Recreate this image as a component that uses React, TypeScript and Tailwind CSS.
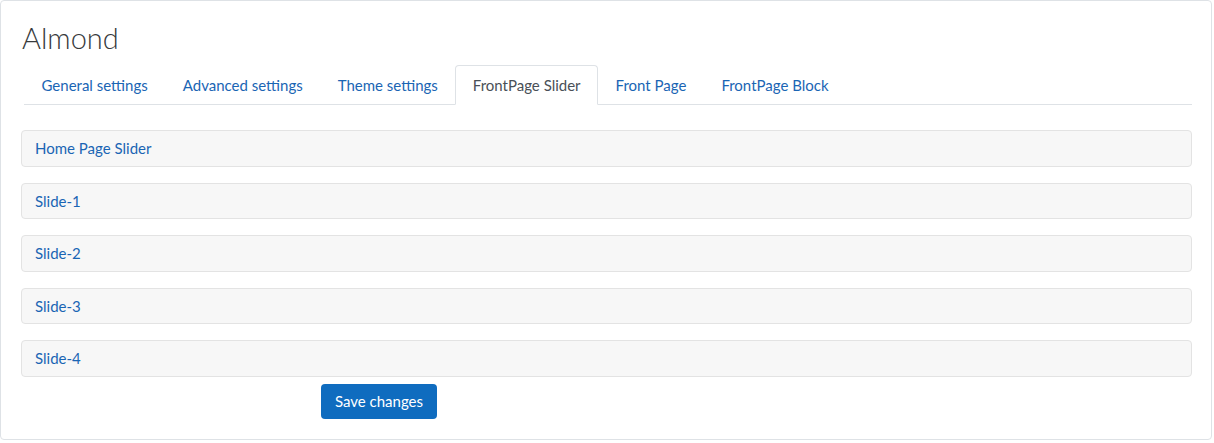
import React from "react";

const TABS = [
  "General settings",
  "Advanced settings",
  "Theme settings",
  "FrontPage Slider",
  "Front Page",
  "FrontPage Block",
];

const SECTIONS = ["Home Page Slider", "Slide-1", "Slide-2", "Slide-3", "Slide-4"];

export default function App() {
  const active = "FrontPage Slider";

  return (
    <div className="w-[1214px] h-[443px] bg-white" style={{ fontFamily: "Lato, 'Open Sans', sans-serif" }}>
      <div className="w-[1212px] h-[440px] border border-[#dee2e6] rounded-[4px] bg-white pl-5 pr-[19px] pt-[20px]">
        {/* Heading */}
        <h2 className="text-[29px] leading-[34px] font-light text-[#373a3c] ml-px">Almond</h2>

        {/* Tabs */}
        <ul className="mt-[10px] ml-[3px] flex border-b border-[#dee2e6]">
          {TABS.map((t) => (
            <li key={t} className="-mb-px">
              <a
                href="#"
                className={`block px-[16.5px] py-2 text-[15px] leading-[22px] border rounded-t-[4px] ${
                  t === active
                    ? "bg-white text-[#495057] border-[#dee2e6] border-b-white"
                    : "text-[#1a65b4] border-transparent"
                }`}
              >
                {t}
              </a>
            </li>
          ))}
        </ul>

        {/* Collapsible sections */}
        <div className="mt-[25px] flex flex-col gap-[16px]">
          {SECTIONS.map((s) => (
            <div
              key={s}
              className="h-[36.5px] flex items-center px-[13px] bg-[#f7f7f7] border border-[#e3e3e3] rounded-[4px]"
            >
              <span className="text-[15px] text-[#1a65b4]">{s}</span>
            </div>
          ))}
        </div>

        {/* Submit */}
        <div className="mt-[7.5px] pl-[300px]">
          <button
            type="button"
            className="h-[35px] w-[116px] rounded-[4px] bg-[#0f6cbf] text-white text-[15px]"
          >
            Save changes
          </button>
        </div>
      </div>
    </div>
  );
}
